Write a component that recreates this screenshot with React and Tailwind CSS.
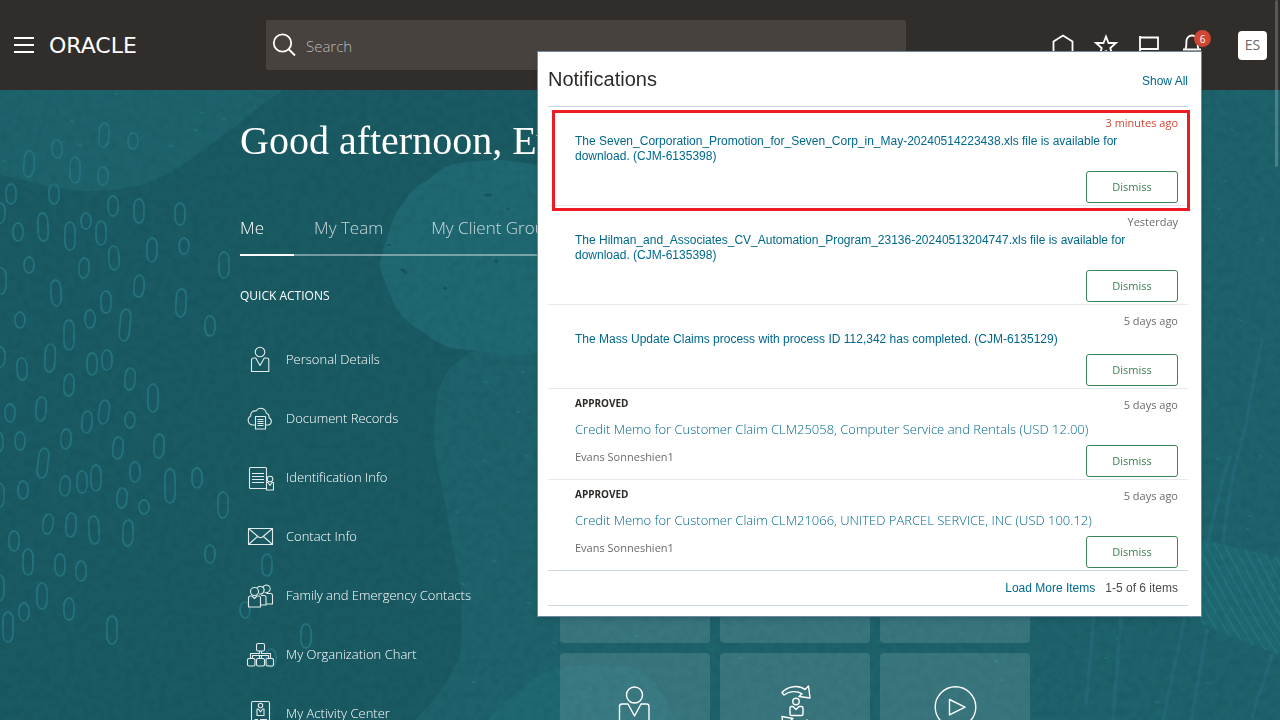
import React, { useState } from "react";

const OVALS = [
  [104, 135, 12, 4], [133, 141, 8, 0], [57, 149, 9, -4], [29, 164, 13, 4], [75, 170, 13, 0],
  [103, 176, 9, 0], [11, 194, 10, 0], [54, 194, 10, 0], [113, 206, 10, 0], [139, 211, 12, 0],
  [180, 214, 11, 0], [0, 213, 10, 0], [43, 227, 14, -3], [18, 232, 9, 0], [70, 236, 14, 0],
  [86, 221, 8, 0], [101, 233, 12, 0], [114, 258, 12, -3], [152, 250, 12, 2], [184, 246, 8, 0],
  [224, 265, 13, 0], [29, 265, 8, 0], [84, 268, 10, 5], [1, 281, 13, 0], [56, 293, 13, -3],
  [139, 286, 11, 5], [106, 302, 11, 0], [20, 320, 8, 0], [90, 319, 9, 0], [125, 325, 16, 6],
  [69, 335, 15, 0], [181, 303, 14, 3], [210, 326, 10, 0], [0, 357, 10, 0], [22, 369, 11, -3],
  [50, 358, 14, 3], [92, 364, 11, 0], [107, 360, 10, 0], [130, 379, 11, 4], [69, 385, 11, 3],
  [153, 398, 14, 0], [10, 413, 9, 0], [41, 409, 12, 4], [104, 412, 12, 7], [87, 422, 11, 5],
  [130, 420, 8, 0], [66, 439, 10, 4], [20, 441, 9, 0], [-2, 442, 10, 0], [118, 448, 11, 5],
  [159, 446, 12, 3], [43, 463, 15, 7], [96, 478, 13, 0], [82, 482, 11, 0], [135, 472, 10, 0],
  [170, 486, 17, 0], [197, 478, 10, 0], [65, 486, 10, 3], [23, 490, 9, 0], [-1, 495, 12, 0],
  [122, 498, 10, 4], [144, 507, 7, 0], [223, 505, 13, 0], [48, 524, 10, 8], [71, 525, 12, 4],
  [94, 530, 14, -4], [128, 533, 13, 2], [14, 541, 10, 0], [28, 562, 13, 0], [210, 554, 9, 0],
  [60, 565, 11, 0], [81, 571, 10, 0], [-1, 588, 13, 0], [42, 596, 13, 0], [24, 612, 9, 0],
  [69, 609, 11, 0], [8, 627, 15, 0], [112, 630, 14, 0], [267, 565, 11, 0], [245, 610, 8, 0],
  [306, 636, 12, 0], [271, 658, 9, 0],
];

const SPECKS = [
  [5, 161], [202, 113], [224, 119], [196, 130], [171, 146], [116, 94], [72, 121], [80, 145],
  [486, 382], [523, 372], [518, 412], [485, 461], [527, 456], [457, 512], [463, 584], [494, 561],
  [474, 682], [528, 603], [637, 636], [555, 643], [740, 658], [840, 682], [996, 661], [1002, 680],
  [1106, 658], [1157, 702], [1208, 683], [1118, 639], [1226, 181], [1219, 209], [1262, 240],
  [1240, 320], [1218, 459], [1261, 456], [1248, 529], [1250, 516], [1232, 130],
];

const STRIPES = Array.from({ length: 24 }, (_, i) => i);

const QUICK_ACTIONS = [
  { label: "Personal Details", icon: PersonIcon },
  { label: "Document Records", icon: CloudDocumentIcon },
  { label: "Identification Info", icon: IdentificationIcon },
  { label: "Contact Info", icon: EnvelopeIcon },
  { label: "Family and Emergency Contacts", icon: FamilyIcon },
  { label: "My Organization Chart", icon: OrgChartIcon },
  { label: "My Activity Center", icon: ActivityIcon },
];

const NOTIFICATIONS = [
  {
    id: 1,
    time: "3 minutes ago",
    recent: true,
    title:
      "The Seven_Corporation_Promotion_for_Seven_Corp_in_May-20240514223438.xls file is available for download. (CJM-6135398)",
  },
  {
    id: 2,
    time: "Yesterday",
    title:
      "The Hilman_and_Associates_CV_Automation_Program_23136-20240513204747.xls file is available for download. (CJM-6135398)",
  },
  {
    id: 3,
    time: "5 days ago",
    title: "The Mass Update Claims process with process ID 112,342 has completed. (CJM-6135129)",
  },
  {
    id: 4,
    time: "5 days ago",
    status: "APPROVED",
    title: "Credit Memo for Customer Claim CLM25058, Computer Service and Rentals (USD 12.00)",
    author: "Evans Sonneshien1",
  },
  {
    id: 5,
    time: "5 days ago",
    status: "APPROVED",
    title: "Credit Memo for Customer Claim CLM21066, UNITED PARCEL SERVICE, INC (USD 100.12)",
    author: "Evans Sonneshien1",
  },
];

// --- Icons ---
function LineIcon({ children }) {
  return (
    <svg
      viewBox="0 0 28 28"
      className="h-7 w-7 shrink-0"
      fill="none"
      stroke="#e3ecec"
      strokeWidth="1.1"
      strokeLinejoin="round"
      aria-hidden="true"
    >
      {children}
    </svg>
  );
}

function PersonIcon() {
  return (
    <LineIcon>
      <circle cx="14" cy="6" r="4.8" />
      <path d="M9.8 12H7.5a2 2 0 0 0-2 2v11.5h17.3V14a2 2 0 0 0-2-2h-2.5L14 19.5 9.8 12Z" />
    </LineIcon>
  );
}

function CloudDocumentIcon() {
  return (
    <LineIcon>
      <path d="M9.5 20H7a4.8 4.8 0 0 1-2.3-9A4.3 4.3 0 0 1 10 6a5.6 5.6 0 0 1 10.3 2 4.6 4.6 0 0 1 2.7 4.8A3.8 3.8 0 0 1 22.5 20h-3" />
      <path d="M9.5 11.5h10v12.5h-10zM11.5 14.5h6M11.5 16.5h6M11.5 18.5h6M11.5 20.5h6" />
    </LineIcon>
  );
}

function IdentificationIcon() {
  return (
    <LineIcon>
      <path d="M20.5 24.5h-16a1 1 0 0 1-1-1v-19a1 1 0 0 1 1-1h15a1 1 0 0 1 1 1v14" />
      <path d="M6 9.5h12M6 12.5h12M6 15.5h12M6 18.5h12" />
      <circle cx="24" cy="15" r="2.8" />
      <path d="M22 18.5h-1.5V26h7v-7.5H26l-2 3-2-3Z" />
    </LineIcon>
  );
}

function EnvelopeIcon() {
  return (
    <LineIcon>
      <path d="M2.5 5.5h24v16h-24z" />
      <path d="m2.5 5.5 10 8.5q2 1.3 4 0l10-8.5M2.5 21.5l9-8M26.5 21.5l-9-8" />
    </LineIcon>
  );
}

function FamilyIcon() {
  return (
    <LineIcon>
      <circle cx="8.5" cy="9.5" r="4" />
      <path d="M11 6.3a3.8 3.8 0 1 1 2.3 5.6M17 5a3.8 3.8 0 1 1 1.6 5.2" />
      <path d="M6 14H4.5a2 2 0 0 0-2 2v9h12v-9a2 2 0 0 0-2-2H11l-2.5 2.5L6 14Z" />
      <path d="M15 13.5h3a2 2 0 0 1 2 2V23h-5M20.5 11.5h4a2 2 0 0 1 2 2V22h-6" />
    </LineIcon>
  );
}

function OrgChartIcon() {
  return (
    <LineIcon>
      <rect x="10.5" y="2.5" width="8" height="7.5" rx="1.5" />
      <rect x="1.5" y="17.5" width="7.5" height="7.5" rx="1.5" />
      <rect x="10.5" y="17.5" width="8" height="7.5" rx="1.5" />
      <rect x="20" y="17.5" width="7.5" height="7.5" rx="1.5" />
      <path d="M13.5 10v2.5h-9v5M15.5 10v2.5h9v5M6.5 17.5v-3h16v3M13.5 14.5v3M15.5 14.5v3" />
    </LineIcon>
  );
}

function ActivityIcon() {
  return (
    <LineIcon>
      <rect x="5.5" y="1.5" width="18" height="25" rx="1.5" />
      <circle cx="14.5" cy="5.5" r="2.2" />
      <path d="M12.5 9H11v6.5h7V9h-1.5l-2 3-2-3ZM8.5 19.5H12M14 19.5h7M8.5 22.5H12M14 22.5h7" />
    </LineIcon>
  );
}

function TileIcon({ children }) {
  return (
    <svg
      viewBox="0 0 48 48"
      className="h-12 w-12"
      fill="none"
      stroke="#fff"
      strokeWidth="1.4"
      strokeLinejoin="round"
      aria-hidden="true"
    >
      {children}
    </svg>
  );
}

function TilePerson() {
  return (
    <TileIcon>
      <circle cx="23.5" cy="12" r="8" />
      <path d="M17 21h-6a2.5 2.5 0 0 0-2.5 2.5V45H38V23.500A2.500 2.500 0 0 0 35.500 21H30l-6.500 12L17 21Z" />
    </TileIcon>
  );
}

function TileCycle() {
  return (
    <TileIcon>
      <path d="M11 9.5C17 2.5 28 2 34 6.500L37.500 3 39 15l-11-1.500 3-2.700C26 7.500 18 8 13 12Z" />
      <circle cx="25" cy="18.5" r="3.2" />
      <path d="M22 23.5h-1.5A1.5 1.5 0 0 0 19 25v6a1.5 1.5 0 0 0 1.5 1.5h10A1.5 1.5 0 0 0 32 31v-6a1.5 1.5 0 0 0-1.500-1.500H28l-3 3-3-3Z" />
      <path d="M12.5 46 11 33.5l11 2-3 2.5c5 3.5 12 3 17-1l2.500 3C32 46 22 47 16 42Z" />
    </TileIcon>
  );
}

function TilePlay() {
  return (
    <TileIcon>
      <circle cx="24.5" cy="24" r="20.3" />
      <path d="M18.5 16.5 34 24.2l-15.500 7.700Z" />
    </TileIcon>
  );
}

const TILES = [
  { label: "Directory" },
  { label: "Journeys" },
  { label: "Pay" },
  { label: "Time" },
  { label: "Career" },
  { label: "Learning" },
  { label: "Personal", icon: TilePerson },
  { label: "Roles", icon: TileCycle },
  { label: "Play", icon: TilePlay },
];

function HeaderIcon({ label, children }) {
  return (
    <button type="button" aria-label={label} className="relative h-7 w-7">
      <svg
        viewBox="0 0 28 28"
        className="h-7 w-7"
        fill="none"
        stroke="#fff"
        strokeWidth="1.8"
        aria-hidden="true"
      >
        {children}
      </svg>
      {label === "Notifications" && (
        <span className="absolute -top-px left-4 flex h-[17px] w-[17px] items-center justify-center rounded-full bg-[#d04634] text-[10px] leading-none text-white">
          6
        </span>
      )}
    </button>
  );
}

// --- Page sections ---
function Backdrop() {
  return (
    <svg
      viewBox="0 0 1280 720"
      preserveAspectRatio="xMidYMin slice"
      className="absolute inset-0 h-full w-full"
      aria-hidden="true"
    >
      <defs>
        <filter id="grain" x="0" y="0" width="100%" height="100%" colorInterpolationFilters="sRGB">
          <feTurbulence type="fractalNoise" baseFrequency="0.12" numOctaves="3" seed="4" />
          <feColorMatrix values="0 0 0 0 0.07  0 0 0 0 0.27  0 0 0 0 0.31  0 1.6 0 0 -0.7" />
        </filter>
        <clipPath id="leaf">
          <path d="M1180 536 1212 542l68 16v97l-40-15-60-26Z" />
        </clipPath>
      </defs>
      <rect width="1280" height="720" fill="#1a5a62" />
      <path d="M0 90h283c-22 14-38 30-62 47-28 20-46 37-80 48-42 11-82 5-108-2-14-4-22-6-33-8Z" fill="#1e636b" />
      <path
        d="M540 90h740v630H415c14-14 24-26 34-42 10-18 13-24 12-42 1-22 1-42-3-62-4-24-8-40-11-60-6-34-13-52-13-84 1-28 5-52 18-64 14-12 30-18 41-27l57-2Z"
        fill="#1e626b"
      />
      <path
        d="M496 160c-22 1-36 2-46 5-12 4-16 12-26 17-14 8-18 16-26 28-8 14-12 32-16 45-5 14 2 22 6 34 6 20 16 32 30 40 16 9 22 18 38 20 30 1 50 8 84 5l60-60V180c-30-8-70-19-104-20Z"
        fill="#1f6871"
      />
      <path d="M486 720c18-14 30-30 54-46 30-12 54-10 82-8 24 2 42 22 54 54Z" fill="#1f6871" />
      <g fill="none" stroke="#257380" strokeWidth="1.8">
        {OVALS.map(([cx, cy, ry, tilt]) => (
          <rect
            key={`${cx}-${cy}`}
            x={cx - 5}
            y={cy - ry}
            width="10"
            height={ry * 2}
            rx="5"
            ry={Math.min(ry, 8)}
            transform={`rotate(${tilt} ${cx} ${cy})`}
          />
        ))}
      </g>
      <g fill="#277a82" opacity="0.6">
        {SPECKS.map(([x, y]) => (
          <ellipse key={`${x}-${y}`} cx={x} cy={y} rx="2.5" ry="1" transform={`rotate(20 ${x} ${y})`} />
        ))}
      </g>
      <g fill="#174f57" opacity="0.8">
        <ellipse cx="488" cy="195" rx="4" ry="1.5" />
        <ellipse cx="404" cy="271" rx="4" ry="1.5" transform="rotate(35 404 271)" />
        <ellipse cx="508" cy="209" rx="2" ry="1" />
        <ellipse cx="496" cy="261" rx="2" ry="1.5" />
        <ellipse cx="445" cy="288" rx="2" ry="1.5" />
        <ellipse cx="389" cy="245" rx="2" ry="1" />
      </g>
      <g fill="none" stroke="#226876" strokeWidth="3.5" strokeLinecap="round">
        <path d="M1094 616l-8 88M1121 616l-8 104M1185 616c-8 40-14 64-22 104M1207 630c-6 34-10 60-16 90M1272 655c-8 28-14 40-20 62" />
        <path d="M1262 340c-6 30-12 60-16 84-10 36-18 70-23 120M1230 457c-8 18-14 52-22 84" />
      </g>
      <path d="M1180 536 1212 542l68 16v97l-40-15-60-26Z" fill="#1f6871" />
      <g clipPath="url(#leaf)" fill="none" stroke="#24727c" strokeWidth="1.8">
        {STRIPES.map((i) => (
          <path key={i} d={`M${1090 + i * 9} 530c22 38 34 70 74 130`} />
        ))}
      </g>
      <rect y="90" width="1280" height="630" filter="url(#grain)" opacity="0.25" />
    </svg>
  );
}

function Header() {
  return (
    <header className="relative flex h-[90px] items-center bg-[#312d2a]">
      <div className="flex w-[266px] shrink-0 items-center gap-[15px] pl-3.5">
        <button type="button" aria-label="Menu" className="flex w-5 flex-col gap-[5px]">
          <span className="h-0.5 w-full bg-white" />
          <span className="h-0.5 w-full bg-white" />
          <span className="h-0.5 w-full bg-white" />
        </button>
        <a href="#" className="pt-0.5 font-['DejaVu_Sans'] text-[22px] leading-6 text-white">
          ORACLE
        </a>
      </div>

      <div className="flex h-[50px] w-1/2 items-center gap-2.5 rounded-xs bg-[#47423e] pl-1.5">
        <svg viewBox="0 0 24 24" className="h-6 w-6 shrink-0" fill="none" stroke="#fff" strokeWidth="1.8" aria-hidden="true">
          <circle cx="10.5" cy="10" r="8.7" />
          <path d="m16.5 16 6.500 6.500" />
        </svg>
        <input
          type="text"
          aria-label="Search"
          placeholder="Search"
          className="h-full min-w-0 flex-1 bg-transparent pt-0.5 text-[15px] font-light text-white placeholder:text-[#bdb9b6] focus:outline-none"
        />
      </div>

      <div className="ml-auto flex items-center pr-[13px]">
        <div className="mr-8 flex gap-[15px]">
          <HeaderIcon label="Home">
            <path d="M4.5 25V10.5L14 4.500l9.500 6V25Z" />
          </HeaderIcon>
          <HeaderIcon label="Favorites">
            <path d="m14 5.500 2.500 6.500H24l-5.700 5 2 7-6.300-4-6.300 4 2-7L4 12h7.500Z" />
          </HeaderIcon>
          <HeaderIcon label="Watchlist">
            <path d="M5 5v20M5 6.500h18V18H5" />
          </HeaderIcon>
          <HeaderIcon label="Notifications">
            <path d="M5 18.500h18M7.500 18c1.500-3 .5-5.500 1-8a5.500 5.500 0 0 1 11 0c.5 2.500-.5 5 1 8" />
          </HeaderIcon>
        </div>
        <button
          type="button"
          className="flex h-[29px] w-[29px] items-center justify-center rounded-sm bg-white text-sm leading-none text-[#6b6763]"
        >
          ES
        </button>
      </div>
    </header>
  );
}

function Notification({ item, onDismiss }) {
  const dismissButton = (
    <button
      type="button"
      onClick={() => onDismiss(item.id)}
      className="h-8 w-[92px] shrink-0 rounded-[3px] border border-[#3b8457] text-[11px] text-[#3b7f50]"
    >
      Dismiss
    </button>
  );

  return (
    <li className="relative border-b border-[#e6eaec] pt-2 pr-2.5 pb-0.5 pl-[27px] last:border-[#ccd8e1]">
      <div className="flex h-4 items-start justify-between text-[11px] leading-4">
        <strong className="text-[10px] leading-3 font-bold text-[#2d2a28]">{item.status}</strong>
        <span className={item.recent ? "text-[#d04634]" : "text-[#6b6b6b]"}>{item.time}</span>
      </div>

      {item.status ? (
        <>
          <a href="#" className="mt-1.5 block text-[13px] leading-5 font-light text-[#00688c]">
            {item.title}
          </a>
          <div className="mt-1.5 flex items-start justify-between">
            <span className="mt-1 text-[11px] leading-4 text-[#6b6b6b]">{item.author}</span>
            {dismissButton}
          </div>
        </>
      ) : (
        <>
          <a
            href="#"
            className="mt-[3px] block pr-7 font-['Liberation_Sans'] text-xs leading-[15px] text-[#00688c]"
          >
            {item.title}
          </a>
          <div className="mt-[7px] flex justify-end">{dismissButton}</div>
        </>
      )}

      {item.recent && (
        <div className="pointer-events-none absolute top-[3px] -right-0.5 -bottom-1.5 left-1 z-10 border-3 border-[#ed1c24]" />
      )}
    </li>
  );
}

function NotificationsPanel() {
  const [items, setItems] = useState(NOTIFICATIONS);

  const handleDismiss = (id) => {
    setItems(items.filter((item) => item.id !== id));
  };

  return (
    <section className="absolute top-[51px] right-[78px] z-20 w-[665px] border border-[#7089a0] bg-white pr-[13px] pb-2.5 pl-2.5 shadow-md">
      <div className="flex h-[55px] items-center justify-between border-b border-[#ccd8e1] font-['Liberation_Sans']">
        <h2 className="text-xl text-[#2d2a28]">Notifications</h2>
        <a href="#" className="mt-1 text-xs text-[#00688c]">
          Show All
        </a>
      </div>
      <ul>
        {items.map((item) => (
          <Notification key={item.id} item={item} onDismiss={handleDismiss} />
        ))}
      </ul>
      <div className="flex h-[35px] items-center justify-end gap-2.5 border-b border-[#ccd8e1] pr-2.5 font-['Liberation_Sans'] text-xs">
        <a href="#" className="text-[#00688c]">
          Load More Items
        </a>
        <span className="text-[#4a4a4a]">1-5 of 6 items</span>
      </div>
    </section>
  );
}

export default function App() {
  return (
    <div className="relative h-screen overflow-hidden font-['Open_Sans',sans-serif]">
      <Backdrop />
      <Header />

      <main className="relative mx-auto w-5/8 pt-7 text-white">
        <h1 className="truncate font-['Liberation_Serif'] text-[40px] leading-[46px]">
          Good afternoon, Evans Sonneshien
        </h1>

        <nav className="mt-[50px] flex h-[42px] gap-5 border-b-2 border-white/40 text-[17px] leading-7 font-light whitespace-nowrap">
          <a href="#" className="h-[42px] border-b-2 border-white pr-[30px]">
            Me
          </a>
          <a href="#" className="h-[42px] pr-7 text-white/75">
            My Team
          </a>
          <a href="#" className="h-[42px] pr-7 text-white/75">
            My Client Groups
          </a>
        </nav>

        <div className="mt-8 flex gap-5">
          <div className="w-[300px] shrink-0">
            <h2 className="text-xs leading-4">QUICK ACTIONS</h2>
            <ul className="mt-[26px]">
              {QUICK_ACTIONS.map(({ label, icon: Icon }) => (
                <li key={label}>
                  <a href="#" className="flex h-[59px] items-center gap-3 pl-1.5 text-[13px] font-light">
                    <Icon />
                    {label}
                  </a>
                </li>
              ))}
            </ul>
          </div>

          <div className="mt-[45px] grid shrink-0 grid-cols-3 gap-2.5 self-start">
            {TILES.map(({ label, icon: Icon }) => (
              <button
                key={label}
                type="button"
                aria-label={label}
                className="flex h-[150px] w-[150px] justify-center rounded-sm bg-white/12 pt-[30px]"
              >
                {Icon && <Icon />}
              </button>
            ))}
          </div>
        </div>
      </main>

      <NotificationsPanel />
      <div className="absolute top-0 right-0.5 h-[167px] w-[3px] rounded-full bg-white/20" />
    </div>
  );
}
